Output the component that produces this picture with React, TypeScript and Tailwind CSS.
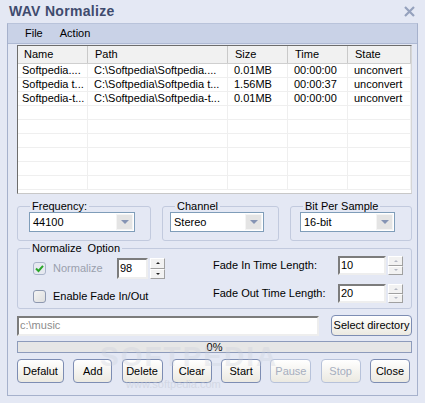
import React from 'react';

const font = { fontFamily: '"Liberation Sans", Arial, sans-serif' };

const rows = [
  ['Softpedia....', 'C:\\Softpedia\\Softpedia....', '0.01MB', '00:00:00', 'unconvert'],
  ['Softpedia t...', 'C:\\Softpedia\\Softpedia t...', '1.56MB', '00:00:37', 'unconvert'],
  ['Softpedia-t...', 'C:\\Softpedia\\Softpedia-t...', '0.01MB', '00:00:00', 'unconvert'],
  ['', '', '', '', ''],
  ['', '', '', '', ''],
  ['', '', '', '', ''],
  ['', '', '', '', ''],
  ['', '', '', '', ''],
  ['', '', '', '', ''],
];

const cols = 'grid grid-cols-[70px_140px_60px_60px_1fr]';

function Combo({ value, width }: { value: string; width: string }) {
  return (
    <div className={`flex h-[20px] border border-[#7f9db9] bg-white ${width}`}>
      <div className="flex-1 pl-[3px] flex items-center text-[11px] text-black">{value}</div>
      <div className="w-[17px] m-[1px] bg-[#e4e4e4] border border-[#f4f4f4] flex items-center justify-center">
        <div className="w-0 h-0 border-l-[4px] border-r-[4px] border-t-[4px] border-l-transparent border-r-transparent border-t-[#8594b4]" />
      </div>
    </div>
  );
}

function Spin({ disabled, h }: { disabled?: boolean; h: string }) {
  const arrow = disabled ? '#b4b8c4' : '#222';
  return (
    <div className={`flex flex-col w-[15px] ${h}`}>
      {[0, 1].map((i) => (
        <div
          key={i}
          className="flex-1 bg-[#f2f2f2] border border-t-white border-l-white border-b-[#a0a0a0] border-r-[#a0a0a0] flex items-center justify-center"
        >
          {i === 0 ? (
            <div className="w-0 h-0 border-l-[2px] border-r-[2px] border-b-[2px] border-l-transparent border-r-transparent" style={{ borderBottomColor: arrow }} />
          ) : (
            <div className="w-0 h-0 border-l-[2px] border-r-[2px] border-t-[2px] border-l-transparent border-r-transparent" style={{ borderTopColor: arrow }} />
          )}
        </div>
      ))}
    </div>
  );
}

function Sunken({ value, width, h, gray }: { value: string; width: string; h: string; gray?: boolean }) {
  return (
    <div
      className={`${width} ${h} bg-white border-2 border-t-[#7c7c7c] border-l-[#7c7c7c] border-b-[#eeeeee] border-r-[#eeeeee] flex items-center pl-[1px] text-[11px] ${gray ? 'text-[#8c8c8c]' : 'text-black'}`}
    >
      {value}
    </div>
  );
}

function Btn({ label, w, h = 'h-[24px]', disabled }: { label: string; w: string; h?: string; disabled?: boolean }) {
  return (
    <div
      className={`${w} ${h} rounded-[4px] border flex items-center justify-center text-[11px] bg-gradient-to-b from-white to-[#ebe9e1] ${
        disabled ? 'border-[#b7c2da] text-[#a6aebf]' : 'border-[#7d8db3] text-black'
      }`}
    >
      {label}
    </div>
  );
}

function Group({ label, width, children }: { label: string; width: string; children: React.ReactNode }) {
  return (
    <fieldset className={`${width} border border-[#c2cade] rounded-[3px]`}>
      <legend className="ml-[12px] px-[2px] text-[11px] leading-[13px] text-black">{label}</legend>
      {children}
    </fieldset>
  );
}

export default function App() {
  return (
    <div className="w-[425px] h-[403px] bg-[#e4e8f4] relative overflow-hidden select-none" style={font}>
      {/* Title bar */}
      <div className="h-[23px] flex items-center justify-between pl-[9px] pr-[10px]">
        <span className="text-[14px] font-bold text-[#3f4b6e] tracking-[0.3px]">WAV Normalize</span>
        <svg width="11" height="11" viewBox="0 0 11 11">
          <path d="M1 1 L10 10 M10 1 L1 10" stroke="#95a1bd" strokeWidth="2.2" />
        </svg>
      </div>

      {/* Client */}
      <div className="mx-[7px] h-[373px] border-x border-b border-x-[#a6b1cc] border-b-[#a6b1cc] border-t border-t-[#b9c3da] flex flex-col">
        <div className="h-[20px] bg-[#c9d2e7] border-b border-[#aeb9d3] flex items-center pl-[17px] gap-[17px] text-[11px] text-black">
          <span>File</span>
          <span>Action</span>
        </div>

        <div className="pl-[9px] pr-[5px] flex flex-col">
          {/* List */}
          <div className="mt-[1px] h-[149px] bg-white border border-t-[#6d6d6d] border-l-[#6d6d6d] border-b-[#c8c8c8] border-r-[#d6d6d6] overflow-hidden text-[11px] text-black">
            <div className={`${cols} h-[18px] bg-[#f1f1f1] border-b border-[#cfcfcf]`}>
              {['Name', 'Path', 'Size', 'Time', 'State'].map((h, i) => (
                <div
                  key={h}
                  className={`flex items-center ${i === 0 ? 'pl-[6px]' : 'pl-[7px]'} border-r border-[#c9c9c9]`}
                >
                  {h}
                </div>
              ))}
            </div>
            {rows.map((r, ri) => (
              <div key={ri} className={`${cols} h-[14px] border-b border-[#efefef]`}>
                {r.map((c, ci) => (
                  <div
                    key={ci}
                    className={`flex items-center overflow-hidden whitespace-nowrap ${ci === 0 ? 'pl-[4px]' : 'pl-[6px]'} border-r border-[#efefef] leading-[13px]`}
                  >
                    {c}
                  </div>
                ))}
              </div>
            ))}
          </div>

          {/* Combo groups */}
          <div className="mt-[6px] flex gap-[11px]">
            <Group label="Frequency:" width="w-[134px] h-[41px]">
              <div className="pl-[11px] -mt-[1px]">
                <Combo value="44100" width="w-[106px]" />
              </div>
            </Group>
            <Group label="Channel" width="w-[117px] h-[41px]">
              <div className="pl-[7px] -mt-[1px]">
                <Combo value="Stereo" width="w-[94px]" />
              </div>
            </Group>
            <Group label="Bit Per Sample" width="w-[122px] h-[41px]">
              <div className="pl-[9px] -mt-[1px]">
                <Combo value="16-bit" width="w-[95px]" />
              </div>
            </Group>
          </div>

          {/* Normalize option */}
          <fieldset className="mt-[1px] h-[67px] border border-[#c2cade] rounded-[3px]">
            <legend className="ml-[12px] px-[2px] text-[11px] leading-[13px] text-black">Normalize&nbsp;&nbsp;Option</legend>
            <div className="flex text-[11px] text-black">
              <div className="w-[195px] pl-[15px] pt-[3px] flex flex-col gap-[7px]">
                <div className="h-[21px] flex items-center">
                  <div className="w-[13px] h-[13px] rounded-[3px] border border-[#aab4ca] bg-[#e6e9f0] flex items-center justify-center">
                    <svg width="9" height="9" viewBox="0 0 9 9">
                      <path d="M1 4.5 L3.5 7 L8 1.8" fill="none" stroke="#2aa62a" strokeWidth="2" />
                    </svg>
                  </div>
                  <span className="ml-[7px] w-[64px] text-[#9aa0ad]">Normalize</span>
                  <Sunken value="98" width="w-[31px]" h="h-[21px]" />
                  <div className="ml-[2px]">
                    <Spin h="h-[21px]" />
                  </div>
                </div>
                <div className="h-[20px] flex items-center">
                  <div className="w-[13px] h-[13px] rounded-[3px] border border-[#8e98b0] bg-gradient-to-br from-[#f4f4f4] to-[#dedede]" />
                  <span className="ml-[7px]">Enable Fade In/Out</span>
                </div>
              </div>
              <div className="pt-[1px] flex flex-col gap-[9px]">
                <div className="h-[19px] flex items-center">
                  <span className="w-[125px]">Fade In Time Length:</span>
                  <Sunken value="10" width="w-[48px]" h="h-[19px]" />
                  <div className="ml-[2px]">
                    <Spin disabled h="h-[19px]" />
                  </div>
                </div>
                <div className="h-[19px] flex items-center">
                  <span className="w-[125px]">Fade Out Time Length:</span>
                  <Sunken value="20" width="w-[48px]" h="h-[19px]" />
                  <div className="ml-[2px]">
                    <Spin disabled h="h-[19px]" />
                  </div>
                </div>
              </div>
            </div>
          </fieldset>

          {/* Directory */}
          <div className="mt-[6px] flex items-center">
            <Sunken value="c:\music" width="w-[302px]" h="h-[20px]" gray />
            <div className="ml-auto">
              <Btn label="Select directory" w="w-[81px]" h="h-[21px]" />
            </div>
          </div>

          {/* Progress */}
          <div className="mt-[5px] h-[12px] bg-[#e6e6e6] border border-[#8d9bbb] flex items-center justify-center text-[11px] leading-[10px] text-black">
            0%
          </div>

          {/* Buttons */}
          <div className="mt-[6px] flex justify-between pr-[2px]">
            <Btn label="Defalut" w="w-[47px]" />
            <Btn label="Add" w="w-[39px]" />
            <Btn label="Delete" w="w-[41px]" />
            <Btn label="Clear" w="w-[40px]" />
            <Btn label="Start" w="w-[40px]" />
            <Btn label="Pause" w="w-[41px]" disabled />
            <Btn label="Stop" w="w-[40px]" disabled />
            <Btn label="Close" w="w-[40px]" />
          </div>
        </div>
      </div>

      {/* Watermark */}
      <div className="absolute left-[100px] top-[343px] pointer-events-none text-[28px] font-bold tracking-[2px] text-[#c9ceda] opacity-30 leading-none">
        SOFTPEDIA
      </div>
      <div className="absolute left-[126px] top-[376px] pointer-events-none text-[11px] text-[#c3c9d6] opacity-50">
        www.softpedia.com
      </div>
    </div>
  );
}
